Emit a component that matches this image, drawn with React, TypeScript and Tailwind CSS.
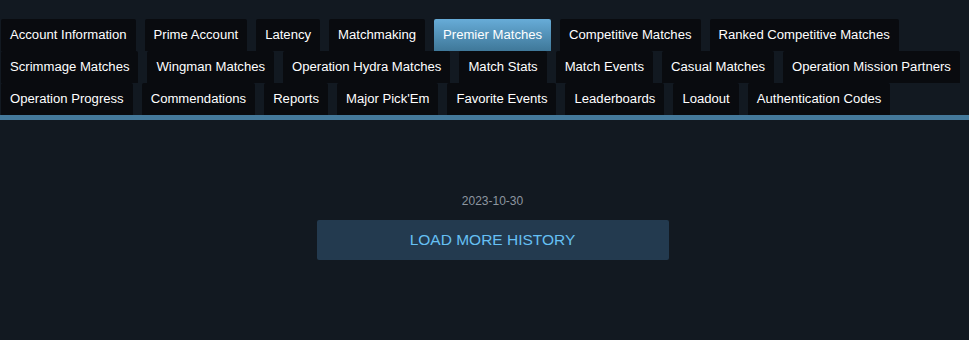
const tabs = [
  "Account Information",
  "Prime Account",
  "Latency",
  "Matchmaking",
  "Premier Matches",
  "Competitive Matches",
  "Ranked Competitive Matches",
  "Scrimmage Matches",
  "Wingman Matches",
  "Operation Hydra Matches",
  "Match Stats",
  "Match Events",
  "Casual Matches",
  "Operation Mission Partners",
  "Operation Progress",
  "Commendations",
  "Reports",
  "Major Pick'Em",
  "Favorite Events",
  "Leaderboards",
  "Loadout",
  "Authentication Codes",
];

const active = "Premier Matches";

export default function App() {
  return (
    <div
      className="w-[969px] h-[340px] bg-[#121921] overflow-hidden"
      style={{ fontFamily: '"Liberation Sans", Arial, sans-serif' }}
    >
      <div className="pt-[19px]">
        <div className="flex flex-wrap pl-px gap-x-[9px]">
          {tabs.map((t) =>
            t === active ? (
              <div
                key={t}
                className="h-8 px-[9px] flex items-center text-[13.125px] text-white rounded-t-[2px] bg-gradient-to-b from-[#67acd8] to-[#3f7899]"
              >
                {t}
              </div>
            ) : (
              <div
                key={t}
                className="h-8 px-[9px] flex items-center text-[13.125px] text-white rounded-t-[2px] bg-[#090b0f]"
              >
                {t}
              </div>
            )
          )}
        </div>
        <div className="h-[5px] bg-[#44799b]" />
      </div>
      <div className="flex flex-col items-center pt-[74px] pl-4">
        <div className="text-[12px] leading-[14px] text-[#8d96a0]">2023-10-30</div>
        <button className="mt-3 w-[352px] h-10 rounded-[2px] bg-[#233a4f] text-[#66c0f4] text-[15.5px]">
          LOAD MORE HISTORY
        </button>
      </div>
    </div>
  );
}
